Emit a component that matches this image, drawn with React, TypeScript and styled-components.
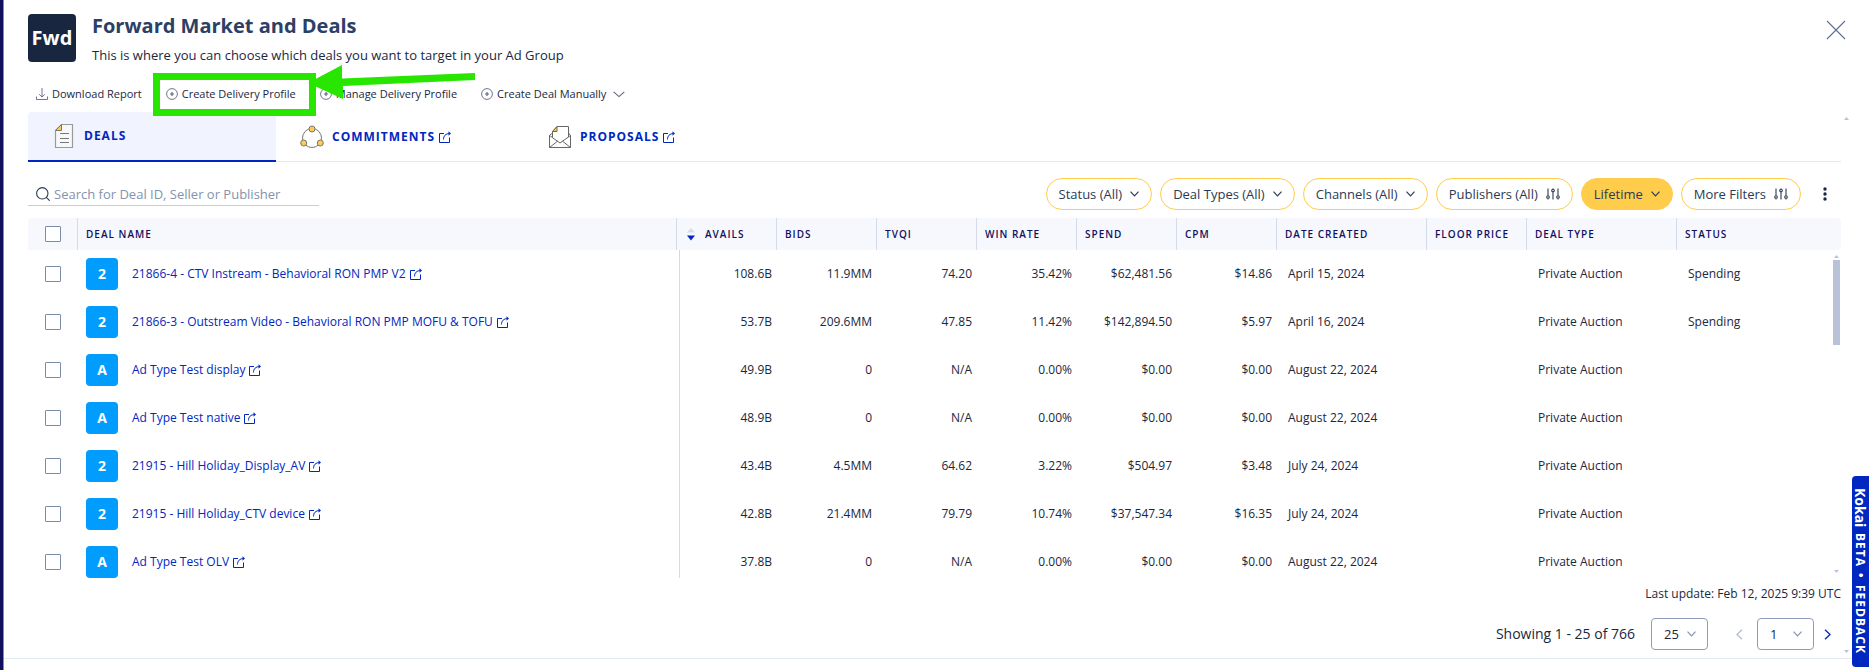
import React from "react";
import styled, { createGlobalStyle, css } from "styled-components";

const GlobalStyle = createGlobalStyle`
  * { box-sizing: border-box; }
  body {
    margin: 0;
    background: #fff;
    color: #1a2740;
    font: 12px/16px "Open Sans", "Noto Sans", sans-serif;
  }
  button, input, select { font: inherit; color: inherit; margin: 0; }
  button { background: none; border: 0; padding: 0; cursor: pointer; }
  a { text-decoration: none; color: #0027bf; }
  svg { display: block; flex: none; }
`;

const Page = styled.main`
  position: relative;
  min-height: 100vh;
  border-left: 3px solid #12105e;
`;

const Panel = styled.div`
  border-left: 1px solid #8b8ba0;
  min-height: 100vh;
`;

const Content = styled.div`
  padding: 0 28px 8px 24px;
  border-bottom: 1px solid #e3e9f0;
`;

const Header = styled.header`
  display: flex;
  gap: 16px;
  height: 76px;
  padding-top: 14px;
`;

const Logo = styled.div`
  width: 48px;
  height: 48px;
  border-radius: 4px;
  background: #19263f;
  color: #fff;
  font-size: 20px;
  font-weight: 700;
  line-height: 48px;
  text-align: center;
`;

const Heading = styled.div`
  flex: 1;
`;

const Title = styled.h1`
  margin: 0 0 8px;
  color: #2c4066;
  font-size: 20px;
  font-weight: 700;
  line-height: 24px;
`;

const Subtitle = styled.p`
  margin: 0;
  font-size: 13px;
  line-height: 18px;
`;

const CloseButton = styled.button`
  align-self: flex-start;
  margin-top: 6px;
  margin-right: -5px;
`;

const Toolbar = styled.div`
  display: flex;
  align-items: center;
  gap: 24px;
  height: 36px;
  padding-left: 8px;
  font-size: 11px;
`;

const ToolButton = styled.button`
  display: flex;
  align-items: center;
  gap: 4px;
  white-space: nowrap;
`;

const Tabs = styled.nav`
  display: flex;
  height: 50px;
  box-shadow: inset 0 -1px #e6e8ee;
`;

const Tab = styled.a<{ $active?: boolean }>`
  display: flex;
  align-items: center;
  gap: 8px;
  width: 248px;
  padding: 0 0 1px 24px;
  font-size: 12px;
  font-weight: 700;
  letter-spacing: 1px;
  ${(p) =>
    p.$active &&
    css`
      background: #f1f4fe;
      border-bottom: 2px solid #0027bf;
      border-radius: 4px 0 0 0;
    `}
`;

const TabLabel = styled.span`
  display: flex;
  align-items: center;
  gap: 4px;
`;

const FilterBar = styled.div`
  display: flex;
  align-items: center;
  justify-content: space-between;
  padding: 16px 0 8px;
`;

const Search = styled.label`
  display: flex;
  align-items: center;
  gap: 4px;
  width: 291px;
  height: 24px;
  padding-left: 8px;
  border-bottom: 1px solid #ffcd4b;
`;

const SearchInput = styled.input`
  flex: 1;
  min-width: 0;
  padding: 0;
  border: 0;
  outline: 0;
  background: none;
  font-size: 13px;
  &::placeholder { color: #8492ad; opacity: 1; }
`;

const Filters = styled.div`
  display: flex;
  align-items: center;
  gap: 8px;
`;

const Pill = styled.button<{ $filled?: boolean }>`
  display: flex;
  align-items: center;
  gap: 8px;
  height: 32px;
  padding: 0 12px;
  border: 1px solid #ffcd4b;
  border-radius: 16px;
  background: ${(p) => (p.$filled ? "#ffcd4b" : "#fff")};
  font-size: 13px;
  color: #2c3a54;
  white-space: nowrap;
`;

const MenuButton = styled.button`
  display: flex;
  justify-content: center;
  width: 32px;
  padding: 8px 0;
`;

const TableFrame = styled.section`
  position: relative;
  height: 360px;
  overflow: hidden;
`;

const Table = styled.table`
  width: 100%;
  table-layout: fixed;
  border-spacing: 0;
`;

const Th = styled.th`
  height: 32px;
  padding: 0 0 0 8px;
  border-left: 1px solid #d5dbe8;
  background: #f6f8fd;
  color: #12105e;
  font-size: 10px;
  font-weight: 600;
  letter-spacing: 1px;
  text-align: left;
  text-transform: uppercase;
  white-space: nowrap;
  &:first-child { border-left: 0; border-radius: 4px 0 0 0; }
  &:last-child { border-radius: 0 4px 4px 0; }
`;

const SortHead = styled.span`
  display: flex;
  align-items: center;
  gap: 10px;
  padding-left: 2px;
`;

const Td = styled.td<{ $right?: boolean; $ruled?: boolean }>`
  height: 48px;
  padding: ${(p) => (p.$right ? "0 4px 0 0" : "0 0 0 12px")};
  text-align: ${(p) => (p.$right ? "right" : "left")};
  white-space: nowrap;
  ${(p) =>
    p.$ruled &&
    css`
      background: linear-gradient(#d5d9e2, #d5d9e2) 3px 0 / 1px 100% no-repeat;
    `}
`;

const CheckCell = styled.td`
  padding: 0;
`;

const Check = styled.input`
  appearance: none;
  display: block;
  width: 16px;
  height: 16px;
  margin: 0 0 0 17px;
  border: 1px solid #7c8bab;
  border-radius: 1px;
  background: #fff;
`;

const HeadCheck = styled(Check)`
  margin-left: 9px;
`;

const NameCell = styled.td`
  padding: 0 0 0 9px;
`;

const Deal = styled.div`
  display: flex;
  align-items: center;
  gap: 14px;
`;

const Badge = styled.span`
  width: 32px;
  height: 32px;
  border-radius: 4px;
  background: #009dff;
  color: #fff;
  font-size: 14px;
  font-weight: 700;
  line-height: 32px;
  text-align: center;
`;

const DealLink = styled.a`
  display: flex;
  align-items: center;
  gap: 4px;
  white-space: nowrap;
`;

const Scroll = styled.div`
  position: absolute;
  top: 37px;
  right: 1px;
  bottom: 5px;
  display: flex;
  flex-direction: column;
  align-items: center;
  gap: 2px;
  width: 8px;
`;

const Thumb = styled.div`
  width: 7px;
  height: 85px;
  margin-bottom: auto;
  background: #b8c2d9;
`;

const PageScrollArrow = styled.div<{ $top: number }>`
  position: absolute;
  top: ${(p) => p.$top}px;
  right: 20px;
`;

const Updated = styled.p`
  margin: 0;
  line-height: 32px;
  text-align: right;
`;

const Pager = styled.div`
  display: flex;
  align-items: center;
  justify-content: flex-end;
  padding-top: 8px;
  padding-right: 10px;
  font-size: 14px;
`;

const PageCount = styled.span`
  margin-right: 2px;
`;

const PagerSelect = styled.label`
  position: relative;
  margin-left: 14px;
  svg { position: absolute; right: 12px; top: 13px; pointer-events: none; }
`;

const Select = styled.select`
  appearance: none;
  display: block;
  width: 57px;
  height: 32px;
  padding: 0 12px;
  border: 1px solid #8e9bba;
  border-radius: 4px;
  background: #fff;
  font-size: 13px;
`;

const StepButton = styled.button<{ $first?: boolean }>`
  margin-left: ${(p) => (p.$first ? "28px" : "10px")};
`;

const Feedback = styled.button`
  position: absolute;
  top: 476px;
  right: 0;
  display: flex;
  align-items: center;
  gap: 6px;
  width: 17px;
  height: 191px;
  padding: 12px 0;
  border-radius: 4px 0 0 4px;
  background: #0027bf;
  color: #fff;
  font-size: 12px;
  font-weight: 700;
  line-height: 17px;
  letter-spacing: 1px;
  writing-mode: vertical-rl;
  white-space: nowrap;
`;

const Brand = styled.span`
  font-size: 14px;
  letter-spacing: 0;
`;

const Annotation = styled.svg`
  position: absolute;
  top: 60px;
  left: 147px;
  pointer-events: none;
`;

const External = () => (
  <svg width="12" height="12" viewBox="0 0 12 12" fill="none" stroke="#0027bf">
    <path d="M5 2.500H.5V11.500H10.500V6.500" />
    <path d="M4.500 8.500C4.500 5 6.500 2.500 11 2.500" />
    <path d="M9.500 .3L12 2.500L9.500 4.700Z" fill="#0027bf" stroke="none" />
  </svg>
);

const PlusCircle = () => (
  <svg width="12" height="12" viewBox="0 0 12 12" fill="none" stroke="#5d6880" strokeWidth="0.9">
    <circle cx="6" cy="6" r="5.400" />
    <path d="M6 4V8M4 6H8" strokeWidth="1.200" />
  </svg>
);

const Download = () => (
  <svg width="12" height="12" viewBox="0 0 12 12" fill="none" stroke="#5d6880" strokeWidth="0.9">
    <path d="M6 0V9M3.200 6.300L6 9L8.800 6.300M.5 8.500V11.500H11.500V8.500" />
  </svg>
);

const Chevron = ({ color = "#2c3a54", width = 9 }: { color?: string; width?: number }) => (
  <svg width={width} height={width > 9 ? 7 : 6} viewBox="0 0 9 6" preserveAspectRatio="none" fill="none" stroke={color} strokeWidth={width > 9 ? 0.8 : 1.2}>
    <path d="M.5 .7L4.500 4.800L8.500 .7" />
  </svg>
);

const Step = ({ back }: { back?: boolean }) => (
  <svg width="7" height="11" viewBox="0 0 7 11" fill="none" stroke={back ? "#b4bdd0" : "#0027bf"} strokeWidth="1.300">
    <path d={back ? "M6 .7L1 5.500L6 10.300" : "M1 .7L6 5.500L1 10.300"} />
  </svg>
);

const Sliders = () => (
  <svg width="14" height="12" viewBox="0 0 14 12" fill="none" stroke="#2c3a54" strokeWidth="1.100">
    <path d="M2 .5V7.500M2 10.500V11.500M7 .5V1M7 4V11.500M12 .5V7.500M12 10.500V11.500" />
    <circle cx="2" cy="9" r="1.300" />
    <circle cx="7" cy="2.500" r="1.300" />
    <circle cx="12" cy="9" r="1.300" />
  </svg>
);

const Triangle = ({ down }: { down?: boolean }) => (
  <svg width="5" height="3" viewBox="0 0 5 3">
    <path d={down ? "M0 0H5L2.500 3Z" : "M0 3H5L2.500 0Z"} fill="#b8c2d9" />
  </svg>
);

const SortIcon = () => (
  <svg width="8" height="14" viewBox="0 0 8 14">
    <path d="M0 5.500H8L4 1Z" fill="#d5dbe8" />
    <path d="M0 8.500H8L4 13.500Z" fill="#0027bf" />
  </svg>
);

const DocIcon = () => (
  <svg width="24" height="24" viewBox="0 0 24 24" fill="none" stroke="#777">
    <path d="M9.500 .5H20.500V23.500H3.500V6.500Z" fill="#f8f8fa" stroke="#999" strokeWidth="1.200" />
    <path d="M9.500 .5V6.500H3.500Z" fill="#ffcd4b" />
    <path d="M8 9.500H17M8 14.500H17M8 18.500H17" />
  </svg>
);

const NodesIcon = () => (
  <svg width="24" height="24" viewBox="0 0 24 24" fill="none" stroke="#777">
    <circle cx="12" cy="13" r="9.500" />
    <g fill="#ffcd4b">
      <circle cx="12" cy="4" r="3" />
      <circle cx="3.700" cy="18" r="3" />
      <circle cx="20.300" cy="18" r="3" />
    </g>
  </svg>
);

const MailIcon = () => (
  <svg width="24" height="24" viewBox="0 0 24 24" fill="none" stroke="#666">
    <path d="M4.500 8L1.500 10.500V22.500H22.500V10.500L20.500 8M1.500 10.500L12 18L22.500 10.500M1.500 22.500L9.500 16.200M22.500 22.500L14.500 16.200" />
    <path d="M4.500 12V6.500L9 1.500H20.500V12" />
    <path d="M9 1.500V6.500H4.500Z" fill="#ffcd4b" />
  </svg>
);

const COLUMNS = ["Bids", "TVQI", "Win Rate", "Spend", "CPM", "Date Created", "Floor Price", "Deal Type", "Status"];
const WIDTHS = [49, undefined, 100, 100, 100, 100, 100, 100, 150, 100, 150, 165];

const DEALS = [
  { name: "21866-4 - CTV Instream - Behavioral RON PMP V2", nums: ["108.6B", "11.9MM", "74.20", "35.42%", "$62,481.56", "$14.86"], date: "April 15, 2024", status: "Spending" },
  { name: "21866-3 - Outstream Video - Behavioral RON PMP MOFU & TOFU", nums: ["53.7B", "209.6MM", "47.85", "11.42%", "$142,894.50", "$5.97"], date: "April 16, 2024", status: "Spending" },
  { name: "Ad Type Test display", nums: ["49.9B", "0", "N/A", "0.00%", "$0.00", "$0.00"], date: "August 22, 2024", status: "" },
  { name: "Ad Type Test native", nums: ["48.9B", "0", "N/A", "0.00%", "$0.00", "$0.00"], date: "August 22, 2024", status: "" },
  { name: "21915 - Hill Holiday_Display_AV", nums: ["43.4B", "4.5MM", "64.62", "3.22%", "$504.97", "$3.48"], date: "July 24, 2024", status: "" },
  { name: "21915 - Hill Holiday_CTV device", nums: ["42.8B", "21.4MM", "79.79", "10.74%", "$37,547.34", "$16.35"], date: "July 24, 2024", status: "" },
  { name: "Ad Type Test OLV", nums: ["37.8B", "0", "N/A", "0.00%", "$0.00", "$0.00"], date: "August 22, 2024", status: "" },
];

export default function App() {
  return (
    <Page>
      <GlobalStyle />
      <Panel>
        <Content>
          <Header>
            <Logo>Fwd</Logo>
            <Heading>
              <Title>Forward Market and Deals</Title>
              <Subtitle>This is where you can choose which deals you want to target in your Ad Group</Subtitle>
            </Heading>
            <CloseButton aria-label="Close">
              <svg width="20" height="20" viewBox="0 0 20 20" stroke="#5f6f94" strokeWidth="1.100">
                <path d="M1 1L19 19M19 1L1 19" />
              </svg>
            </CloseButton>
          </Header>

          <Toolbar>
            <ToolButton><Download />Download Report</ToolButton>
            <ToolButton><PlusCircle />Create Delivery Profile</ToolButton>
            <ToolButton><PlusCircle />Manage Delivery Profile</ToolButton>
            <ToolButton>
              <PlusCircle />Create Deal Manually&nbsp;
              <Chevron width={12} color="#5d6880" />
            </ToolButton>
          </Toolbar>

          <Tabs>
            <Tab href="#deals" $active><DocIcon />DEALS</Tab>
            <Tab href="#commitments"><NodesIcon /><TabLabel>COMMITMENTS<External /></TabLabel></Tab>
            <Tab href="#proposals"><MailIcon /><TabLabel>PROPOSALS<External /></TabLabel></Tab>
          </Tabs>

          <FilterBar>
            <Search>
              <svg width="14" height="14" viewBox="0 0 14 14" fill="none" stroke="#2c3a54" strokeWidth="1.100">
                <circle cx="6.300" cy="6.300" r="5.700" />
                <path d="M10.300 10.300L13.700 13.700" />
              </svg>
              <SearchInput aria-label="Search deals" placeholder="Search for Deal ID, Seller or Publisher" />
            </Search>
            <Filters>
              <Pill>Status (All)<Chevron /></Pill>
              <Pill>Deal Types (All)<Chevron /></Pill>
              <Pill>Channels (All)<Chevron /></Pill>
              <Pill>Publishers (All)<Sliders /></Pill>
              <Pill $filled>Lifetime<Chevron /></Pill>
              <Pill>More Filters<Sliders /></Pill>
              <MenuButton aria-label="More options">
                <svg width="4" height="14" viewBox="0 0 4 14" fill="#1a2740">
                  <circle cx="2" cy="2" r="1.700" />
                  <circle cx="2" cy="7" r="1.700" />
                  <circle cx="2" cy="12" r="1.700" />
                </svg>
              </MenuButton>
            </Filters>
          </FilterBar>

          <TableFrame>
            <Table>
              <colgroup>
                {WIDTHS.map((w, i) => <col key={i} width={w} />)}
              </colgroup>
              <thead>
                <tr>
                  <Th><HeadCheck type="checkbox" aria-label="Select all deals" /></Th>
                  <Th>Deal Name</Th>
                  <Th><SortHead><SortIcon />Avails</SortHead></Th>
                  {COLUMNS.map((c) => <Th key={c}>{c}</Th>)}
                </tr>
              </thead>
              <tbody>
                {DEALS.map((d) => (
                  <tr key={d.name}>
                    <CheckCell><Check type="checkbox" aria-label={`Select ${d.name}`} /></CheckCell>
                    <NameCell>
                      <Deal>
                        <Badge>{d.name[0]}</Badge>
                        <DealLink href="#deal">{d.name}<External /></DealLink>
                      </Deal>
                    </NameCell>
                    {d.nums.map((n, i) => <Td key={i} $right $ruled={i === 0}>{n}</Td>)}
                    <Td>{d.date}</Td>
                    <Td />
                    <Td>Private Auction</Td>
                    <Td>{d.status}</Td>
                  </tr>
                ))}
              </tbody>
            </Table>
            <Scroll>
              <Triangle />
              <Thumb />
              <Triangle down />
            </Scroll>
          </TableFrame>

          <Updated>Last update: Feb 12, 2025 9:39 UTC</Updated>
          <Pager>
            <PageCount>Showing 1 - 25 of 766</PageCount>
            <PagerSelect>
              <Select aria-label="Rows per page" defaultValue="25"><option>25</option><option>50</option></Select>
              <Chevron color="#8492ad" />
            </PagerSelect>
            <StepButton $first aria-label="Previous page"><Step back /></StepButton>
            <PagerSelect>
              <Select aria-label="Page" defaultValue="1"><option>1</option><option>2</option></Select>
              <Chevron color="#8492ad" />
            </PagerSelect>
            <StepButton aria-label="Next page"><Step /></StepButton>
          </Pager>
        </Content>
      </Panel>

      <PageScrollArrow $top={117}><Triangle /></PageScrollArrow>
      <PageScrollArrow $top={650}><Triangle down /></PageScrollArrow>
      <Feedback><Brand>Kokai</Brand><span>BETA</span><span>•</span><span>FEEDBACK</span></Feedback>
      <Annotation width="332" height="60" viewBox="0 0 332 60">
        <rect x="6.500" y="16.500" width="156" height="36" fill="none" stroke="#28e600" strokeWidth="7" />
        <path d="M158 23L192 5V18.500L325 13V20L193 26V39Z" fill="#28e600" />
      </Annotation>
    </Page>
  );
}
